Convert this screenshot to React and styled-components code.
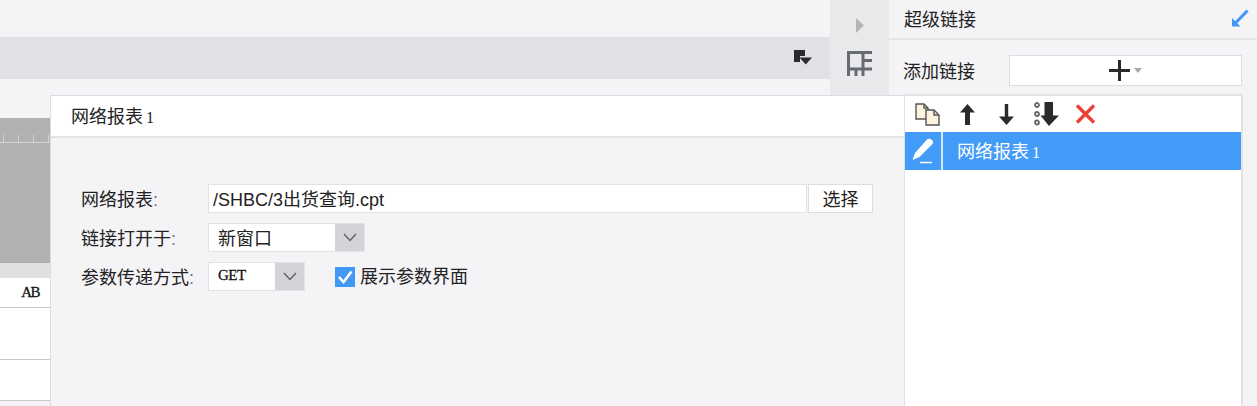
import React from 'react';
import styled, { createGlobalStyle } from 'styled-components';

const GlobalStyle = createGlobalStyle`
  html, body {
    margin: 0;
    padding: 0;
    background: #f4f4f7;
    overflow: hidden;
  }
  body {
    font-family: "Liberation Sans", "Noto Sans CJK SC", sans-serif;
    font-size: 18px;
    color: #222;
  }
`;

const Page = styled.div`
  width: 1257px;
  height: 406px;
  display: flex;
  flex-direction: column;
  overflow: hidden;
`;

const TopRow = styled.div`
  height: 95px;
  display: flex;
  flex: none;
`;

const TopLeft = styled.div`
  width: 830px;
  padding-top: 37px;
  box-sizing: border-box;
`;

const ToolStrip = styled.div`
  height: 42px;
  background: #e0e1e4;
  display: flex;
  align-items: center;
  justify-content: flex-end;
  padding-right: 18px;
  padding-bottom: 1px;
  box-sizing: border-box;
`;

const SideRail = styled.div`
  width: 59px;
  background: #e9e9ec;
  display: flex;
  flex-direction: column;
  align-items: center;
  padding-top: 18px;
  box-sizing: border-box;
  gap: 18px;
`;

const RightTop = styled.div`
  flex: 1;
  display: flex;
  flex-direction: column;
`;

const TitleBar = styled.div`
  height: 36px;
  border-bottom: 2px solid #e5e5e8;
  display: flex;
  align-items: center;
  justify-content: space-between;
  padding: 0 8px 2px 15px;
`;

const AddRow = styled.div`
  display: flex;
  align-items: center;
  padding: 15px 15px 0 14px;
`;

const AddLabel = styled.div`
  width: 106px;
  flex: none;
  padding-bottom: 2px;
`;

const AddButton = styled.div`
  flex: 1;
  height: 29px;
  background: #fff;
  border: 1px solid #dcdde0;
  display: flex;
  align-items: center;
  justify-content: center;
`;

const BottomRow = styled.div`
  flex: 1;
  display: flex;
  min-height: 0;
`;

const Sheet = styled.div`
  width: 50px;
  flex: none;
  padding-top: 23px;
  display: flex;
  flex-direction: column;
`;

const GreyArea = styled.div`
  height: 145px;
  background: #b1b1b1;
  padding-top: 17px;
  box-sizing: border-box;
  flex: none;
`;

const Ruler = styled.div`
  height: 7px;
  border-bottom: 1px solid #d4d4d4;
  background-image: repeating-linear-gradient(
    to right,
    transparent 0,
    transparent 3px,
    #d4d4d4 3px,
    #d4d4d4 4px,
    transparent 4px,
    transparent 15px
  );
`;

const GreyBand = styled.div`
  height: 15px;
  background: #e0e0e1;
  flex: none;
`;

const Cell = styled.div`
  height: ${(p) => p.$h}px;
  background: #fff;
  border-bottom: 1px solid #c8c8c8;
  flex: none;
  box-sizing: border-box;
  display: flex;
  align-items: center;
  justify-content: flex-end;
  padding-right: 11px;
`;

const CodeText = styled.span`
  font-family: "Liberation Serif", serif;
  font-size: 15px;
  letter-spacing: ${(p) => p.$spacing}px;
  color: #111;
  -webkit-text-stroke: 0.3px #111;
`;

const Dialog = styled.div`
  width: 854px;
  flex: none;
  border: 1px solid #dcdde0;
  border-bottom: none;
  border-right: none;
  box-sizing: border-box;
  background: #f4f4f7;
`;

const DialogHeader = styled.div`
  height: 42px;
  background: #fff;
  border-bottom: 2px solid #e4e4e6;
  box-sizing: border-box;
  display: flex;
  align-items: center;
  padding: 0 0 2px 20px;
`;

const Form = styled.div`
  padding: 46px 0 0 30px;
  display: flex;
  flex-direction: column;
  gap: 10px;
`;

const FormRow = styled.div`
  display: flex;
  align-items: center;
  height: 29px;
`;

const Label = styled.div`
  width: 127px;
  flex: none;
  white-space: nowrap;
  padding-bottom: 2px;
`;

const Colon = styled.span`
  color: #776b88;
`;

const TextInput = styled.div`
  width: 599px;
  height: 29px;
  box-sizing: border-box;
  background: #fff;
  border: 1px solid #e2e2e5;
  padding: 0 0 2px 4px;
  display: flex;
  align-items: center;
  flex: none;
`;

const PickButton = styled.div`
  width: 65px;
  height: 29px;
  box-sizing: border-box;
  margin-left: 1px;
  padding-bottom: 2px;
  background: #fff;
  border: 1px solid #dcdde0;
  display: flex;
  align-items: center;
  justify-content: center;
  flex: none;
`;

const Select = styled.div`
  width: ${(p) => p.$w}px;
  height: 29px;
  box-sizing: border-box;
  border: 1px solid #e2e2e5;
  background: #fff;
  display: flex;
  flex: none;
`;

const SelectValue = styled.div`
  flex: 1;
  padding: 0 0 2px 9px;
  display: flex;
  align-items: center;
`;

const SelectArrow = styled.div`
  width: 29px;
  background: #d3d4d8;
  display: flex;
  align-items: center;
  justify-content: center;
`;

const CheckLabel = styled.div`
  margin-left: 30px;
  display: flex;
  align-items: center;
  gap: 5px;
`;

const CheckBox = styled.div`
  width: 20px;
  height: 20px;
  background: #4299f5;
  display: flex;
  align-items: center;
  justify-content: center;
`;

const CheckText = styled.span`
  padding-bottom: 3px;
`;

const LinkList = styled.div`
  width: 339px;
  flex: none;
  margin-top: -1px;
  background: #fff;
  border-style: solid;
  border-color: #e2e2e5;
  border-width: 2px 2px 0 1px;
  box-sizing: border-box;
`;

const ListTools = styled.div`
  height: 36px;
  display: flex;
  align-items: center;
  padding-left: 3px;
  background: #fff;
  box-sizing: border-box;
`;

const ToolIcon = styled.div`
  width: 39.5px;
  flex: none;
  display: flex;
  align-items: center;
  justify-content: center;
`;

const ListItem = styled.div`
  height: 38px;
  background: #429bf7;
  display: flex;
  color: #fff;
`;

const EditCell = styled.div`
  width: 36px;
  border-right: 2px solid #d3e6fb;
  display: flex;
  align-items: center;
  justify-content: center;
  flex: none;
`;

const ItemName = styled.div`
  padding: 0 0 2px 14px;
  display: flex;
  align-items: center;
`;

const Serif1 = styled.span`
  font-family: "Liberation Serif", serif;
  font-size: 16px;
  margin-left: 3px;
`;

const Triangle = () => (
  <svg width="8" height="15" viewBox="0 0 8 15">
    <path d="M0 0 L8 7.5 L0 15 Z" fill="#b4b4b7" />
  </svg>
);

const PanelIcon = () => (
  <svg width="25" height="25" viewBox="0 0 25 25" fill="none" stroke="#666a72" strokeWidth="3">
    <path d="M1.5 25 V1.5 H25" />
    <path d="M0 18 H25 M16 1 V25 M9 18 V25 M16 9.5 H25" />
  </svg>
);

const FormatIcon = () => (
  <svg width="18" height="15" viewBox="0 0 18 15">
    <path d="M0 0 H11 V6 H6 V12 H0 Z" fill="#2a2a2a" />
    <path d="M5.5 7.5 H18 L11.75 14.5 Z" fill="#2a2a2a" />
  </svg>
);

const ExpandArrow = () => (
  <svg width="18" height="18" viewBox="0 0 18 18">
    <path d="M1 17.5 L1 9 L9.5 17.5 Z" fill="#4299f5" />
    <path d="M5 13.5 L16.5 1.5" stroke="#4299f5" strokeWidth="3.2" />
  </svg>
);

const PlusIcon = () => (
  <svg width="34" height="21" viewBox="0 0 34 21">
    <path d="M0 9 H21 V12 H0 Z M9 0 H12 V21 H9 Z" fill="#2b2b2b" />
    <path d="M25 8 H33 L29 13 Z" fill="#a9a9ac" />
  </svg>
);

const CopyIcon = () => (
  <svg width="25" height="23" viewBox="0 0 25 23" stroke="#555" strokeWidth="1.4" fill="#fdf3df">
    <path d="M1 1 H9 L13 5 V16 H1 Z" />
    <path d="M11 7 H19 L24 12 V22 H11 Z" />
    <path d="M9 1 V5 H13 M19 7 V12 H24" fill="none" />
  </svg>
);

const UpIcon = () => (
  <svg width="15" height="21" viewBox="0 0 15 21">
    <path d="M7.5 0 L15 8.5 H10 V21 H5 V8.5 H0 Z" fill="#2b2b2b" />
  </svg>
);

const DownIcon = () => (
  <svg width="15" height="21" viewBox="0 0 15 21">
    <path d="M7.5 21 L15 12.5 H9.2 V0 H5.8 V12.5 H0 Z" fill="#2b2b2b" />
  </svg>
);

const BottomIcon = () => (
  <svg width="25" height="24" viewBox="0 0 25 24">
    <circle cx="3" cy="3" r="2" fill="none" stroke="#666" strokeWidth="1.8" />
    <circle cx="3" cy="12" r="2" fill="none" stroke="#666" strokeWidth="1.8" />
    <circle cx="3" cy="20.5" r="2" fill="none" stroke="#666" strokeWidth="1.8" />
    <path d="M10.5 0 H19 V13.5 H25 L15 24 L6.5 13.5 H10.5 Z" fill="#2b2b2b" />
  </svg>
);

const CloseIcon = () => (
  <svg width="21" height="20" viewBox="0 0 21 20">
    <path d="M2 1.5 L19 18.5 M19 1.5 L2 18.5" stroke="#ee3f36" strokeWidth="3.4" />
  </svg>
);

const PenIcon = () => (
  <svg width="22" height="26" viewBox="0 0 22 26">
    <path d="M15 1.5 C16.5 0 19 0.5 20.5 2.5 C21.5 4 21 5.5 20 6.5 L7.5 19 L0.5 22 L3 15 Z" fill="#fff" />
    <path d="M8 24.5 H20" stroke="#fff" strokeWidth="1.5" />
  </svg>
);

const Chevron = () => (
  <svg width="14" height="9" viewBox="0 0 14 9" fill="none">
    <path d="M1 1 L7 7.5 L13 1" stroke="#5f6166" strokeWidth="1.4" />
  </svg>
);

const CheckMark = () => (
  <svg width="16" height="14" viewBox="0 0 16 14" fill="none">
    <path d="M2 7 L6.5 12 L14.5 1.5" stroke="#fff" strokeWidth="2.6" />
  </svg>
);

export default function App() {
  return (
    <Page>
      <GlobalStyle />
      <TopRow>
        <TopLeft>
          <ToolStrip>
            <FormatIcon />
          </ToolStrip>
        </TopLeft>
        <SideRail>
          <Triangle />
          <PanelIcon />
        </SideRail>
        <RightTop>
          <TitleBar>
            超级链接
            <ExpandArrow />
          </TitleBar>
          <AddRow>
            <AddLabel>添加链接</AddLabel>
            <AddButton>
              <PlusIcon />
            </AddButton>
          </AddRow>
        </RightTop>
      </TopRow>
      <BottomRow>
        <Sheet>
          <GreyArea>
            <Ruler />
          </GreyArea>
          <GreyBand />
          <Cell $h={30}>
            <CodeText $spacing={-1.5}>AB</CodeText>
          </Cell>
          <Cell $h={52} />
          <Cell $h={41} />
        </Sheet>
        <Dialog>
          <DialogHeader>
            <span>
              网络报表<Serif1>1</Serif1>
            </span>
          </DialogHeader>
          <Form>
            <FormRow>
              <Label>
                网络报表<Colon>:</Colon>
              </Label>
              <TextInput>/SHBC/3出货查询.cpt</TextInput>
              <PickButton>选择</PickButton>
            </FormRow>
            <FormRow>
              <Label>
                链接打开于<Colon>:</Colon>
              </Label>
              <Select $w={157}>
                <SelectValue>新窗口</SelectValue>
                <SelectArrow>
                  <Chevron />
                </SelectArrow>
              </Select>
            </FormRow>
            <FormRow>
              <Label>
                参数传递方式<Colon>:</Colon>
              </Label>
              <Select $w={97}>
                <SelectValue>
                  <CodeText $spacing={-0.5}>GET</CodeText>
                </SelectValue>
                <SelectArrow>
                  <Chevron />
                </SelectArrow>
              </Select>
              <CheckLabel>
                <CheckBox>
                  <CheckMark />
                </CheckBox>
                <CheckText>展示参数界面</CheckText>
              </CheckLabel>
            </FormRow>
          </Form>
        </Dialog>
        <LinkList>
          <ListTools>
            <ToolIcon>
              <CopyIcon />
            </ToolIcon>
            <ToolIcon>
              <UpIcon />
            </ToolIcon>
            <ToolIcon>
              <DownIcon />
            </ToolIcon>
            <ToolIcon>
              <BottomIcon />
            </ToolIcon>
            <ToolIcon>
              <CloseIcon />
            </ToolIcon>
          </ListTools>
          <ListItem>
            <EditCell>
              <PenIcon />
            </EditCell>
            <ItemName>
              <span>
                网络报表<Serif1>1</Serif1>
              </span>
            </ItemName>
          </ListItem>
        </LinkList>
      </BottomRow>
    </Page>
  );
}
